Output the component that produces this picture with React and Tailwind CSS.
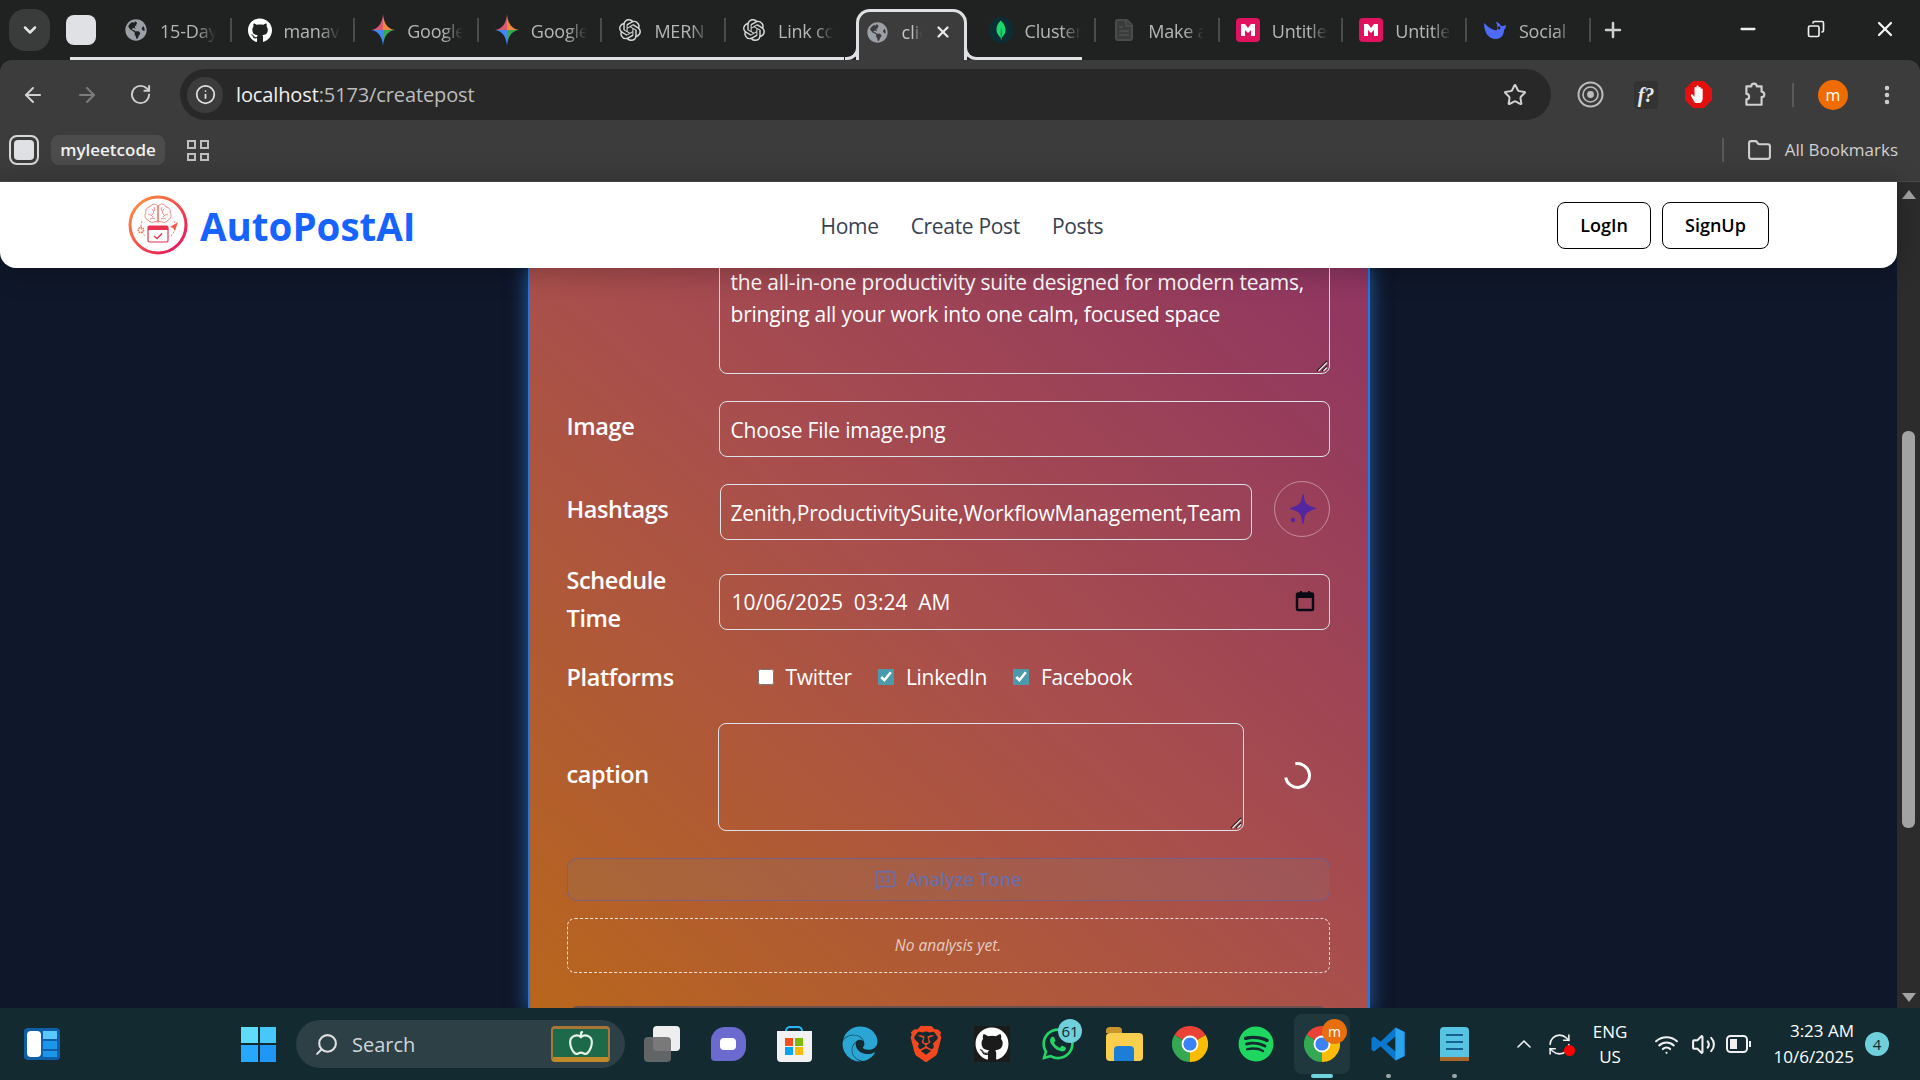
import React from "react";
import { ArrowLeft, ArrowRight, RotateCw, Info, Star, Folder, Plus, X, Minus, Copy, EllipsisVertical, MessageSquareQuote, Search, ChevronDown, ChevronUp, Apple, Wifi, Volume2, RefreshCw, FileText } from "lucide-react";
import { FaGlobeAmericas, FaGithub, FaWhatsapp, FaSpotify, FaEdge } from "react-icons/fa";
import { SiOpenai, SiMongodb, SiBrave } from "react-icons/si";

const Gemini = () => (
  <svg width="24" height="32" viewBox="0 0 24 24" preserveAspectRatio="none">
    <defs>
      <clipPath id="gem"><path d="M12 0C12.6 7 17 11.4 24 12C17 12.6 12.6 17 12 24C11.4 17 7 12.6 0 12C7 11.4 11.4 7 12 0Z" /></clipPath>
    </defs>
    <g clipPath="url(#gem)">
      <rect x="0" y="0" width="12" height="12" fill="#d9596f" />
      <rect x="12" y="0" width="12" height="12" fill="#ef8a3c" />
      <rect x="0" y="12" width="12" height="12" fill="#4285f4" />
      <rect x="12" y="12" width="12" height="12" fill="#34a853" />
    </g>
  </svg>
);

const Miro = () => (
  <svg width="24" height="26" viewBox="0 0 24 24">
    <rect width="24" height="24" rx="4" fill="#e0115f" />
    <path d="M5 6h4l3 4 3-4h4v12h-4v-6l-3 3-3-3v6H5z" fill="#fff" />
  </svg>
);

const Whale = () => (
  <svg width="26" height="26" viewBox="0 0 24 24">
    <path d="M1 5c0 9 4 16 12 16 5 0 8-4 8-9 1-1 2-3 2-5-2 1-4 1-5 1-1-2-3-4-5-4 1 2 2 5 1 8C11 13 6 10 1 5z" fill="#4d6bfe" />
    <circle cx="16" cy="10" r="1.4" fill="#202222" />
  </svg>
);

const Tab = ({ icon, text, last }) => (
  <div className="flex h-[60px] w-[123.6px] shrink-0 items-center pl-[16px]">
    <span className="flex h-[34px] w-[24px] shrink-0 items-center justify-center">{icon}</span>
    <span className="ml-[12px] mt-[2px] w-[56px] overflow-hidden whitespace-nowrap text-[18px] tracking-[-0.2px] text-[#b4b6b8] [mask-image:linear-gradient(to_right,black_65%,transparent)]">{text}</span>
    {!last && <span className="ml-auto h-[24px] w-[2px] bg-[#4a4c4c]"></span>}
  </div>
);

const Chrome = ({ size = 36 }) => (
  <svg width={size} height={size} viewBox="0 0 24 24">
    <path d="M12 12L1.6 6A12 12 0 0 1 22.4 6Z" fill="#ea4335" />
    <path d="M12 12L22.4 6A12 12 0 0 1 12 24Z" fill="#fbbc05" />
    <path d="M12 12L12 24A12 12 0 0 1 1.6 6Z" fill="#34a853" />
    <circle cx="12" cy="12" r="5.6" fill="#fff" />
    <circle cx="12" cy="12" r="4.4" fill="#3b82f6" />
  </svg>
);

const Logo = () => (
  <svg width="60" height="60" viewBox="0 0 60 60">
    <defs>
      <linearGradient id="lg" x1="0" y1="0" x2="1" y2="1">
        <stop offset="0" stopColor="#ff9a3c" />
        <stop offset="1" stopColor="#e5095f" />
      </linearGradient>
    </defs>
    <circle cx="30" cy="30" r="28" fill="#fff" stroke="url(#lg)" strokeWidth="3" />
    <g fill="none" stroke="#ef7a6e" strokeWidth="0.9">
      <path d="M30 11c-3-3-7-2-8 1-3 0-5 3-4 6-2 2-1 6 2 7 1 2 4 3 6 2l4-1z" />
      <path d="M30 11c3-3 7-2 8 1 3 0 5 3 4 6 2 2 1 6-2 7-1 2-4 3-6 2l-4-1z" />
      <path d="M30 11v17M24 14c2 2 2 4 0 6M36 14c-2 2-2 4 0 6M20 19c2 1 4 1 5 3M40 19c-2 1-4 1-5 3M22 24c2-1 4-1 5 0M38 24c-2-1-4-1-5 0M26 12c1 1 1 3 0 4M34 12c-1 1-1 3 0 4" />
      <path d="M14 26c-2 5-1 11 3 15M46 26c2 5 1 11-3 15" strokeDasharray="2 1.5" />
    </g>
    <rect x="20" y="31" width="20" height="16" rx="1.5" fill="#fff" stroke="#e8304f" strokeWidth="1.2" />
    <rect x="20" y="31" width="20" height="4" fill="#e8304f" />
    <path d="M26 41l3 2.5 5-5" fill="none" stroke="#e8304f" strokeWidth="1.4" />
    <circle cx="13" cy="35" r="2.6" fill="none" stroke="#f0703a" strokeWidth="1.6" strokeDasharray="1.5 .8" />
    <path d="M42 32l8-5-3 9-2-3z" fill="#f0604a" />
  </svg>
);

const Handle = () => (
  <svg width="12" height="12" viewBox="0 0 12 12" className="absolute bottom-[2px] right-[2px]" fill="none" strokeWidth="1.200">
    <path d="M1 11L11 1M6 11L11 6" stroke="#1a1a1a" />
    <path d="M2.500 11L11 2.500M7.500 11L11 7.500" stroke="#e8e8e8" />
  </svg>
);

const Row = ({ label, children, className = "" }) => (
  <div className={`flex items-center ${className}`}>
    <div className="-mt-[6px] w-[152px] shrink-0 text-[23.5px] font-semibold leading-[38px] tracking-[-0.4px]">{label}</div>
    {children}
  </div>
);

const field = "rounded-lg border border-[#dbe3ea] bg-transparent text-[21px] leading-[32px] tracking-[-0.22px] text-white outline-none";

const Check = ({ label, checked, className = "" }) => (
  <label className={`flex items-center ${className}`}>
    <input type="checkbox" readOnly checked={checked} className="mr-[12px] -mt-[2px] h-[16px] w-[16px] shrink-0 accent-[#4a9aab]" />
    <span className="text-[21px] tracking-[-0.3px]">{label}</span>
  </label>
);

const TaskIcon = ({ children, className = "" }) => (
  <div className={`flex h-[72px] w-[66px] shrink-0 items-center justify-center ${className}`}>{children}</div>
);

export default function App() {
  return (
    <div className="flex h-screen w-[1920px] flex-col overflow-hidden bg-[#202222] font-['Open_Sans','Noto_Sans',sans-serif] text-white">
      {/* tab strip */}
      <div className="relative flex h-[60px] shrink-0 items-start bg-[#202222]">
        <div className="ml-[9px] mt-[9px] flex h-[42px] w-[41px] items-center justify-center rounded-2xl bg-[#3a3b3b]"><ChevronDown size={20} strokeWidth={3} color="#e3e3e3" /></div>
        <div className="ml-[16px] mt-[15px] h-[30px] w-[30px] rounded-lg bg-[#dfe1e5]"></div>
        <div className="ml-[12px] flex">
          <Tab icon={<FaGlobeAmericas size={22} color="#9aa0a6" />} text="15-Day" />
          <Tab icon={<FaGithub size={25} color="#fff" />} text="manav" />
          <Tab icon={<Gemini />} text="Google" />
          <Tab icon={<Gemini />} text="Google" />
          <Tab icon={<SiOpenai size={22} color="#d8d8d8" />} text="MERN" />
          <Tab icon={<SiOpenai size={22} color="#d8d8d8" />} text="Link cc" last />
        </div>
        <div className="absolute left-[70px] top-[57px] h-[3px] w-[774px] bg-[#dfe1e5]"></div>
        <div className="relative ml-[6px] mt-[9px] flex h-[51px] w-[111px] shrink-0 items-center rounded-t-[14px] border-[3px] border-b-0 border-[#dfe1e5] bg-[#3c3c3c] pb-[8px] pl-[8px]">
          <FaGlobeAmericas size={21} color="#9aa0a6" />
          <span className="ml-[14px] w-[20px] overflow-hidden text-[18px] text-[#c4c6c8] [mask-image:linear-gradient(to_right,black_50%,transparent)]">client</span>
          <X size={18} strokeWidth={3} color="#e8e8e8" className="ml-[12px]" />
          <div className="absolute -left-[14px] bottom-0 h-[14px] w-[14px] rounded-br-[12px] border-b-[3px] border-r-[3px] border-[#dfe1e5]"></div>
          <div className="absolute -right-[14px] bottom-0 h-[14px] w-[14px] rounded-bl-[12px] border-b-[3px] border-l-[3px] border-[#dfe1e5]"></div>
        </div>
        <div className="relative ml-[6px] flex">
          <Tab icon={<span className="flex h-[26px] w-[26px] items-center justify-center rounded-full bg-[#0c2d33]"><SiMongodb size={20} color="#1fd66c" /></span>} text="Cluster" />
          <Tab icon={<FileText size={24} color="#4a4c4c" fill="#3a3b3b" />} text="Make a" />
          <Tab icon={<Miro />} text="Untitled" />
          <Tab icon={<Miro />} text="Untitled" />
          <Tab icon={<Whale />} text="Social" />
          <div className="absolute left-[5px] top-[57px] h-[3px] w-[104px] bg-[#dfe1e5]"></div>
        </div>
        <Plus size={24} strokeWidth={2.5} color="#cfcfcf" className="ml-[10px] mt-[18px]" />
        <div className="ml-auto flex h-[60px] items-start">
          <Minus size={22} strokeWidth={2.5} color="#f0f0f0" className="mr-[48px] mt-[18px]" />
          <Copy size={18} strokeWidth={2.2} color="#f0f0f0" className="mr-[48px] mt-[20px] -scale-x-100" />
          <X size={24} strokeWidth={2.2} color="#f4f4f4" className="mr-[23px] mt-[17px]" />
        </div>
      </div>

      {/* toolbar */}
      <div className="flex h-[73px] shrink-0 items-start rounded-t-xl bg-[#3c3c3c]">
        <div className="flex h-[69px] w-[180px] shrink-0 items-center pl-[21px]">
          <ArrowLeft size={24} strokeWidth={2} color="#d0d0d0" />
          <ArrowRight size={24} strokeWidth={2} color="#7c7c7c" className="ml-[30px]" />
          <RotateCw size={23} strokeWidth={2} color="#d0d0d0" className="ml-[30px]" />
        </div>
        <div className="mt-[9px] flex h-[51px] w-[1371px] shrink-0 items-center rounded-full bg-[#282828] pl-[7px]">
          <span className="flex h-[36px] w-[36px] items-center justify-center rounded-full bg-[#3c3c3c]"><Info size={21} strokeWidth={2} color="#e0e0e0" /></span>
          <span className="ml-[13px] text-[20px] tracking-[-0.12px] text-[#f0f0f0]">localhost<span className="text-[#bdbdbd]">:5173/createpost</span></span>
          <Star size={24} strokeWidth={2} color="#d0d0d0" className="ml-auto mr-[24px]" />
        </div>
        <div className="flex h-[69px] flex-1 items-center">
          <svg width="27" height="27" viewBox="0 0 27 27" className="ml-[26px]" fill="none" stroke="#bdbdbd">
            <circle cx="13.5" cy="13.5" r="12" strokeWidth="2" />
            <circle cx="13.5" cy="13.5" r="7.5" strokeWidth="1.6" />
            <circle cx="13.5" cy="13.5" r="3.4" fill="#bdbdbd" stroke="none" />
          </svg>
          <span className="ml-[30px] flex h-[28px] w-[24px] items-center justify-center rounded-sm bg-[#333] font-['Liberation_Serif',serif] text-[20px] font-bold italic text-[#e8e8e8]">f?</span>
          <svg width="27" height="27" viewBox="0 0 27 27" className="ml-[27px]">
            <path d="M8 0h11l8 8v11l-8 8H8l-8-8V8z" fill="#e50f0f" />
            <path d="M10 22l-4-7c-.7-1.3 1-2.4 2-1l1.5 2V7c0-1.4 2-1.4 2 0V5.500c0-1.400 2.200-1.400 2.200 0V7c0-1.300 2.100-1.300 2.100 0v1.500c0-1.200 1.900-1.200 1.900 0V17c0 3-1.500 5-3.200 5z" fill="#fff" />
          </svg>
          <svg width="26" height="28" viewBox="0 0 24 24" className="ml-[29px]" fill="none" stroke="#d0d0d0" strokeWidth="2" strokeLinejoin="round">
            <path d="M5 4h4.500a2.500 2.500 0 0 1 5 0H19v5a2.500 2.500 0 0 1 0 5v7H5v-5a2.500 2.500 0 0 0 0-5z" />
          </svg>
          <span className="ml-[25px] h-[24px] w-[2px] bg-[#5a5a5a]"></span>
          <span className="ml-[24px] flex h-[30px] w-[30px] items-center justify-center rounded-full bg-[#ef6c00] text-[16px] text-white">m</span>
          <EllipsisVertical size={24} strokeWidth={2.5} color="#d0d0d0" className="ml-[27px]" />
        </div>
      </div>

      {/* bookmarks */}
      <div className="flex h-[49px] shrink-0 items-start border-b border-[#4a4a4a] bg-[#3c3c3c] pt-[2px]">
        <span className="ml-[9px] flex h-[30px] w-[30px] items-center justify-center rounded-lg border-2 border-[#d8d8d8]"><span className="h-[20px] w-[20px] rounded bg-[#dfe1e5]"></span></span>
        <span className="ml-[12px] flex h-[30px] w-[114px] items-center justify-center rounded-lg bg-[#4c4c4c] text-[17px] font-semibold text-[#f0f0f0]">myleetcode</span>
        <span className="ml-[22px] mt-[5px] grid h-[21px] w-[22px] grid-cols-2 gap-[4px]">
          <span className="border-2 border-[#c0c0c0]"></span><span className="border-2 border-[#c0c0c0]"></span>
          <span className="border-2 border-[#c0c0c0]"></span><span className="border-2 border-[#c0c0c0]"></span>
        </span>
        <span className="ml-auto mt-[3px] h-[24px] w-[2px] bg-[#5a5a5a]"></span>
        <Folder size={25} strokeWidth={2} color="#d0d0d0" className="ml-[23px] mt-[3px]" />
        <span className="ml-[13px] mr-[22px] mt-[2px] text-[17px] text-[#d0d0d0]">All Bookmarks</span>
      </div>

      {/* viewport */}
      <div className="flex min-h-0 flex-1">
        <div className="flex min-w-0 flex-1 flex-col bg-[#0f172a]">
          <header className="relative z-10 flex h-[86px] shrink-0 items-center rounded-b-2xl bg-white pl-[128px] pr-[128px] shadow-[0_2px_30px_rgba(0,0,0,0.28)]">
            <Logo />
            <span className="ml-[12px] mt-[3px] text-[38.5px] font-bold leading-none text-[#1763ff]">AutoPostAI</span>
            <nav className="ml-[405px] mt-[3px] flex items-center gap-[32px] text-[21px] tracking-[-0.32px] text-[#374151]">
              <span>Home</span>
              <span>Create Post</span>
              <span>Posts</span>
            </nav>
            <div className="ml-auto flex gap-[11px]">
              <button className="h-[47px] w-[94px] rounded-lg border border-black text-[18px] font-semibold text-black">LogIn</button>
              <button className="h-[47px] w-[107px] rounded-lg border border-black text-[18px] font-semibold text-black">SignUp</button>
            </div>
          </header>

          <main className="mx-auto min-h-0 w-[842px] flex-1 overflow-hidden border-x-2 border-[#2378e6] bg-[linear-gradient(to_top_right,#b8661c,#a94f4c_50%,#8f3562)] pl-[37px] pr-[38px] shadow-[0_0_16px_3px_#1f4f86]">
            <div className="relative ml-[152px] -mt-[43px] h-[149px] w-[611px]">
              <textarea
                readOnly
                className={`${field} block h-full w-full resize-none px-[11px] py-[8px]`}
                value={"Introducing Zenith,\nthe all-in-one productivity suite designed for modern teams,\nbringing all your work into one calm, focused space"}
              />
              <Handle />
            </div>
            <Row label="Image" className="mt-[27px] h-[56px]">
              <div className={`${field} flex h-[56px] w-[611px] items-center px-[11px] pt-[1px]`}>Choose File image.png</div>
            </Row>
            <Row label="Hashtags" className="mt-[27px] h-[56px]">
              <input readOnly className={`${field} ml-[1px] h-[56px] w-[532px] px-[10px] pt-[2px]`} value="Zenith,ProductivitySuite,WorkflowManagement,TeamCollaboration,FocusedWork" />
              <button className="-mt-[6px] ml-[22px] flex h-[56px] w-[56px] items-center justify-center rounded-full border border-white/40">
                <svg width="30" height="30" viewBox="0 0 30 30">
                  <path d="M16 1C16.500 9 18.500 12 28 14.500C18.500 17 16.500 20 16 29C15.500 20 13.500 17 4 14.500C13.500 12 15.500 9 16 1Z" fill="#5427a0" stroke="#5427a0" strokeWidth="1.6" strokeLinejoin="round" />
                  <circle cx="6" cy="26" r="2.2" fill="#5427a0" />
                </svg>
              </button>
            </Row>
            <Row label={<>Schedule<br />Time</>} className="mt-[34px] h-[56px]">
              <div className={`${field} flex h-[56px] w-[611px] items-center whitespace-pre pl-[12px] pr-[14px] tracking-[0px]`}>
                10/06/2025  03:24  AM
                <svg width="20" height="22" viewBox="0 0 20 22" className="ml-auto -mt-[3px]">
                  <path d="M3 3.500h14a1 1 0 0 1 1 1V19a1 1 0 0 1-1 1H3a1 1 0 0 1-1-1V4.500a1 1 0 0 1 1-1z" fill="none" stroke="#0a0a14" strokeWidth="2.4" />
                  <rect x="2" y="3" width="16" height="5" fill="#0a0a14" />
                  <rect x="5" y="1" width="2" height="3" fill="#0a0a14" />
                  <rect x="13" y="1" width="2" height="3" fill="#0a0a14" />
                </svg>
              </div>
            </Row>
            <div className="mt-[30px] flex h-[36px] items-center">
              <div className="w-[191px] shrink-0 text-[23.5px] font-semibold tracking-[-0.4px]">Platforms</div>
              <Check label="Twitter" />
              <Check label="LinkedIn" checked className="ml-[26px]" />
              <Check label="Facebook" checked className="ml-[26px]" />
            </div>
            <Row label="caption" className="mt-[27px]">
              <div className="relative -ml-[1px] h-[108px] w-[526px]">
                <textarea readOnly className={`${field} block h-full w-full resize-none`} value="" />
                <Handle />
              </div>
              <span className="-mt-[4px] ml-[40px] h-[27px] w-[27px] rotate-[-55deg] rounded-full border-[3px] border-white border-t-transparent"></span>
            </Row>
            <button className="mt-[27px] flex h-[43px] w-full items-center justify-center rounded-[10px] border border-[#66609a]/70 bg-[#8080802e] text-[18px] font-semibold text-[#6d6ea6]">
              <MessageSquareQuote size={22} strokeWidth={2} className="mr-[10px]" />
              Analyze Tone
            </button>
            <div className="mt-[17px] flex h-[55px] items-center justify-center rounded-lg border border-dashed border-white/80 text-[15.5px] italic text-white/70">No analysis yet.</div>
            <div className="mx-[3px] mt-[33px] h-[40px] rounded-lg bg-[#6b5050]"></div>
          </main>
        </div>

        {/* scrollbar */}
        <div className="flex w-[23px] shrink-0 flex-col items-center bg-[#2c2c2c] pt-[8px]">
          <span className="h-0 w-0 border-x-[7px] border-b-[9px] border-x-transparent border-b-[#a3a3a3]"></span>
          <span className="mt-[232px] h-[397px] w-[13px] rounded-md bg-[#a3a3a3]"></span>
          <span className="mt-[165px] h-0 w-0 border-x-[7px] border-t-[9px] border-x-transparent border-t-[#a3a3a3]"></span>
        </div>
      </div>

      {/* taskbar */}
      <div className="flex h-[72px] shrink-0 items-center bg-[#132b30]">
        <div className="ml-[24px] flex h-[32px] w-[36px] gap-[2px] rounded-sm bg-[#0f5ea8] p-[3px]">
          <span className="h-full w-[14px] rounded-sm bg-white"></span>
          <span className="flex h-full flex-1 flex-col gap-[2px]"><span className="flex-1 bg-[#59c8fa]"></span><span className="h-[8px] bg-[#1a96ea]"></span><span className="h-[6px] bg-[#1a96ea]"></span></span>
        </div>
        <div className="ml-[181px] grid h-[35px] w-[35px] grid-cols-2 gap-[2px]">
          <span className="bg-[#5fdcfb]"></span><span className="bg-[#47c8fb]"></span>
          <span className="bg-[#27a8fa]"></span><span className="bg-[#1f97f5]"></span>
        </div>
        <div className="ml-[20px] flex h-[48px] w-[329px] shrink-0 items-center rounded-full bg-[#2c4046] pl-[18px]">
          <Search size={25} strokeWidth={2} color="#e0e0e0" className="-scale-x-100" />
          <span className="ml-[13px] mt-[2px] text-[20px] text-[#d0d6d8]">Search</span>
          <span className="ml-[136px] flex h-[36px] w-[59px] items-center justify-center rounded-sm border-x-[2px] border-t-[3px] border-b-[5px] border-x-[#a8753a] border-t-[#a8753a] border-b-[#c08a2c] bg-[#1c6a4a]"><Apple size={26} color="#e6f4e6" /></span>
        </div>
        <div className="ml-[4px] flex items-center">
          <TaskIcon>
            <div className="relative h-[36px] w-[36px]">
              <span className="absolute left-[9px] top-0 h-[25px] w-[27px] rounded-sm bg-[#eeeeee]"></span>
              <span className="absolute bottom-0 left-0 h-[25px] w-[27px] rounded-sm bg-[#6b6b6b]/90"></span>
            </div>
          </TaskIcon>
          <TaskIcon>
            <span className="flex h-[34px] w-[35px] items-center justify-center rounded-[14px] rounded-bl-sm bg-[#6b6bcf]"><span className="h-[12px] w-[16px] rounded-sm bg-white"></span></span>
          </TaskIcon>
          <TaskIcon>
            <div className="flex flex-col items-center">
              <span className="h-[5px] w-[18px] rounded-t-md border-x-2 border-t-2 border-[#29b6f6]"></span>
              <span className="grid h-[31px] w-[35px] grid-cols-2 content-center justify-items-center gap-[1px] rounded-b bg-[#f2f2f2] px-[8px]">
                <span className="h-[8px] w-[8px] bg-[#f25022]"></span><span className="h-[8px] w-[8px] bg-[#7fba00]"></span>
                <span className="h-[8px] w-[8px] bg-[#00a4ef]"></span><span className="h-[8px] w-[8px] bg-[#ffb900]"></span>
              </span>
            </div>
          </TaskIcon>
          <TaskIcon><FaEdge size={36} color="#2ba6d4" /></TaskIcon>
          <TaskIcon><SiBrave size={36} color="#f1481f" /></TaskIcon>
          <TaskIcon><span className="flex h-[36px] w-[36px] items-center justify-center bg-[#1b1b1b]"><FaGithub size={34} color="#fff" /></span></TaskIcon>
          <TaskIcon className="relative">
            <FaWhatsapp size={36} color="#25d366" />
            <span className="absolute left-[33px] top-[11px] flex h-[24px] w-[24px] items-center justify-center rounded-full bg-[#6fd0dc] text-[15px] text-[#10282c]">61</span>
          </TaskIcon>
          <TaskIcon>
            <div className="flex flex-col items-start">
              <span className="h-[6px] w-[16px] rounded-t-sm bg-[#c8962a]"></span>
              <div className="h-[28px] w-[37px] rounded-sm bg-[#f9cf4d] pt-[13px]"><span className="mx-auto block h-[15px] w-[20px] rounded-t bg-[#1c7ed6]"></span></div>
            </div>
          </TaskIcon>
          <TaskIcon><Chrome /></TaskIcon>
          <TaskIcon><FaSpotify size={36} color="#1ed760" /></TaskIcon>
          <TaskIcon className="relative">
            <div className="flex h-[60px] w-[56px] items-center justify-center rounded-lg bg-[#1f383d]"><Chrome /></div>
            <span className="absolute right-[8px] top-[11px] flex h-[25px] w-[25px] items-center justify-center rounded-full bg-[#e86f0c] text-[14px]">m</span>
            <span className="absolute bottom-[2px] h-[4px] w-[22px] rounded bg-[#6fd4de]"></span>
          </TaskIcon>
          <TaskIcon className="relative">
            <svg width="36" height="36" viewBox="0 0 24 24">
              <path d="M17 1l6 3v16l-6 3L7 13.500 2.800 17 1 16V8l1.800-1L7 10.500z" fill="#0a78cf" />
              <path d="M17 7l-6 5 6 5z" fill="#132b30" />
              <path d="M17 1l6 3v16l-6 3z" fill="#2aa4ec" />
            </svg>
            <span className="absolute bottom-[2px] h-[4px] w-[5px] rounded-full bg-[#9aa6a8]"></span>
          </TaskIcon>
          <TaskIcon className="relative">
            <div className="flex h-[34px] w-[29px] flex-col justify-center gap-[5px] rounded-t-sm border-b-[4px] border-[#a9662a] bg-[#58c4e4] px-[6px]">
              <span className="h-[2px] bg-[#17628a]"></span><span className="h-[2px] bg-[#17628a]"></span><span className="h-[2px] bg-[#17628a]"></span>
            </div>
            <span className="absolute bottom-[2px] h-[4px] w-[5px] rounded-full bg-[#9aa6a8]"></span>
          </TaskIcon>
        </div>
        <ChevronUp size={24} strokeWidth={1.6} color="#f0f0f0" className="ml-[25px]" />
        <span className="relative ml-[11px]"><RefreshCw size={25} strokeWidth={1.5} color="#f0f0f0" /><span className="absolute bottom-[1px] right-[-3px] h-[11px] w-[11px] rounded-full bg-[#ff0000]"></span></span>
        <div className="ml-[16px] w-[44px] text-center text-[17px] leading-[25px]">ENG<br />US</div>
        <Wifi size={25} strokeWidth={2} color="#f0f0f0" className="ml-[22px]" />
        <Volume2 size={25} strokeWidth={2} color="#f0f0f0" className="ml-[12px]" />
        <svg width="26" height="20" viewBox="0 0 26 20" className="ml-[10px]" fill="none" stroke="#f0f0f0" strokeWidth="2">
          <rect x="1" y="2" width="20" height="16" rx="3.500" />
          <rect x="4" y="5" width="7" height="10" fill="#f0f0f0" stroke="none" />
          <path d="M24 7v6" />
        </svg>
        <div className="ml-[2px] w-[100px] text-right text-[17px] leading-[26px]">3:23 AM<br />10/6/2025</div>
        <span className="ml-[11px] flex h-[24px] w-[24px] items-center justify-center rounded-full bg-[#6fd0dc] text-[15px] text-[#10282c]">4</span>
      </div>
    </div>
  );
}
